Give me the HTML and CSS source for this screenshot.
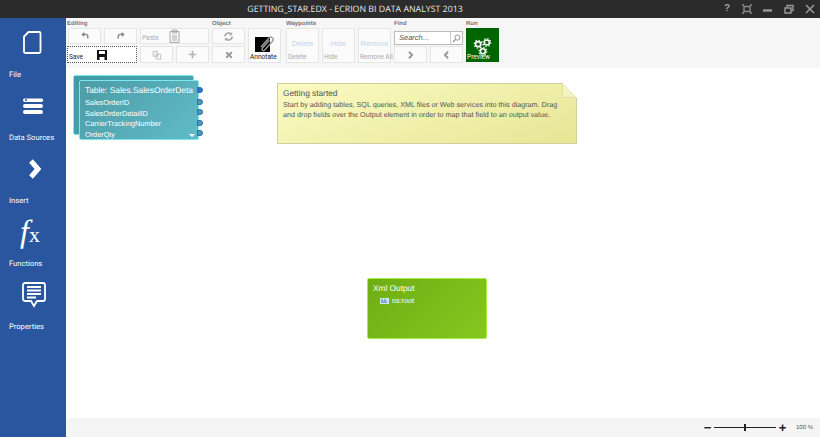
FILE: index.html
```html
<!DOCTYPE html>
<html lang="en">
<head>
    <meta charset="UTF-8">
    <title>GETTING_STAR.EDX - ECRION BI DATA ANALYST 2013</title>
    <link rel="stylesheet" href="styles.css">
</head>
<body>

<header class="titlebar">
    <div class="titlebar_text">GETTING_STAR.EDX - ECRION BI DATA ANALYST 2013</div>
    <div class="titlebar_btns">
        <span class="win_help">?</span>
        <svg width="12" height="12" viewBox="0 0 12 12"><path d="M1 2h2M9 2h2M1 10h2M9 10h2M3 3.500h6v5H3z" fill="none" stroke="#8a8a8a" stroke-width="1.400"/></svg>
        <svg width="12" height="12" viewBox="0 0 12 12"><path d="M1 7.500h9" stroke="#9a9a9a" stroke-width="2.400"/></svg>
        <svg width="12" height="12" viewBox="0 0 12 12"><path d="M2 5h6v5H2zM4 5V2.500h6v5H8" fill="none" stroke="#9a9a9a" stroke-width="1.400"/></svg>
        <svg width="12" height="12" viewBox="0 0 12 12"><path d="M2 2l8 8M10 2l-8 8" stroke="#9a9a9a" stroke-width="1.600"/></svg>
    </div>
</header>

<div class="app">
    <nav class="sidebar">
        <a class="side_item">
            <svg class="side_icon" width="34" height="34" viewBox="0 0 34 34"><path d="M12.500 7H23a1.500 1.500 0 0 1 1.500 1.500v18a1.500 1.500 0 0 1-1.500 1.500H9.500A1.500 1.500 0 0 1 8 26.500V11.500z" fill="none" stroke="#fff" stroke-width="1.800" stroke-linejoin="round"/></svg>
            <span>File</span>
        </a>
        <a class="side_item">
            <svg class="side_icon" width="34" height="34" viewBox="0 0 34 34"><path d="M7 12a1.500 1.500 0 0 1 1.500-1.500h17a1.500 1.500 0 0 1 0 3.500h-17A1.800 1.800 0 0 1 7 12zM7 18a2 2 0 0 1 2-2h16a2 2 0 0 1 0 4H9a2 2 0 0 1-2-2zM7 24a2 2 0 0 1 2-2h16a2 2 0 0 1 0 4H9a2 2 0 0 1-2-2z" fill="#fff"/><circle cx="10" cy="12" r="1" fill="#2a56a0"/></svg>
            <span>Data Sources</span>
        </a>
        <a class="side_item">
            <svg class="side_icon" width="34" height="34" viewBox="0 0 34 34"><path d="M15 10l7 8-7 8" fill="none" stroke="#fff" stroke-width="5"/></svg>
            <span>Insert</span>
        </a>
        <a class="side_item">
            <div class="side_fx"><i>f</i><span>x</span></div>
            <span>Functions</span>
        </a>
        <a class="side_item">
            <svg class="side_icon" width="34" height="34" viewBox="0 0 34 34"><path d="M9 6h18a2 2 0 0 1 2 2v14a2 2 0 0 1-2 2h-6l-3 5-3-5H9a2 2 0 0 1-2-2V8a2 2 0 0 1 2-2z" fill="none" stroke="#fff" stroke-width="1.800"/><path d="M11 10h14M11 13.500h14M11 17h14M11 20.500h9" stroke="#fff" stroke-width="1.800"/></svg>
            <span>Properties</span>
        </a>
    </nav>

    <div class="main">
        <section class="ribbon">
            <div class="rib_group rib_editing">
                <div class="rib_label">Editing</div>
                <div class="rib_grid editing_grid">
                    <button class="rib_btn"><svg width="10" height="8" viewBox="0 0 12 10"><path d="M9.500 8V5.500a2.500 2.500 0 0 0-2.500-2.500H3M5 .8L2.800 3 5 5.200" fill="none" stroke="#888" stroke-width="1.800"/></svg></button>
                    <button class="rib_btn"><svg width="10" height="8" viewBox="0 0 12 10"><path d="M2.500 8V5.500A2.500 2.500 0 0 1 5 3h4M7 .8L9.200 3 7 5.200" fill="none" stroke="#888" stroke-width="1.800"/></svg></button>
                    <button class="rib_btn rib_paste">
                        <span class="rib_caption">Paste</span>
                        <svg width="11" height="14" viewBox="0 0 11 14"><path d="M1 2.500h9v11H1zM3.500 1h4v3h-4zM3 7h5M3 9h5M3 11h5" fill="#f6f6f6" stroke="#aaa"/></svg>
                    </button>
                    <button class="rib_btn"><svg width="11" height="11" viewBox="0 0 12 12"><path d="M2 6a4 4 0 0 1 7-2.500M10 6a4 4 0 0 1-7 2.500" fill="none" stroke="#aaa" stroke-width="1.800"/><path d="M10 1v3.500H6.500M2 11V7.500h3.500" fill="#aaa"/></svg></button>
                    <button class="rib_btn rib_save">
                        <span class="rib_caption rib_caption-dark">Save</span>
                        <svg width="12" height="12" viewBox="0 0 12 12"><path d="M1 1h10v10H1z" fill="#111"/><path d="M3 2h6v3H3z" fill="#fff"/><path d="M3.500 8h5v3h-5z" fill="#fff"/></svg>
                    </button>
                    <button class="rib_btn"><svg width="10" height="10" viewBox="0 0 12 12"><path d="M1.500 1.500h5v6h-5zM5 5h5.500v6H5z" fill="#f4f4f4" stroke="#bbb"/></svg></button>
                    <button class="rib_btn"><svg width="9" height="9" viewBox="0 0 11 11"><path d="M5.500 1v9M1 5.500h9" stroke="#b5b5b5" stroke-width="2"/></svg></button>
                    <button class="rib_btn"><svg width="8" height="8" viewBox="0 0 10 10"><path d="M1.500 1.500l7 7M8.500 1.500l-7 7" stroke="#999" stroke-width="2.400"/></svg></button>
                </div>
            </div>
            <div class="rib_group rib_object">
                <div class="rib_label">Object</div>
                <button class="rib_btn rib_annotate">
                    <svg class="annotate_icon" width="22" height="20" viewBox="0 0 22 20"><path d="M0 4h15v15H0z" fill="#000"/><path d="M6 14l8-9a2.400 2.400 0 0 1 3.500 3.300l-8 9a1.500 1.500 0 0 1-2.200-2l7-8" fill="none" stroke="#999" stroke-width="1.400"/></svg>
                    <span class="rib_caption rib_caption-dark">Annotate</span>
                </button>
            </div>
            <div class="rib_group rib_waypoints">
                <div class="rib_label">Waypoints</div>
                <div class="way_row">
                    <button class="rib_btn way_btn"><span class="way_big">Delete</span><span class="rib_caption">Delete</span></button>
                    <button class="rib_btn way_btn"><span class="way_big">Hide</span><span class="rib_caption">Hide</span></button>
                    <button class="rib_btn way_btn"><span class="way_big">Remove</span><span class="rib_caption">Remove All</span></button>
                </div>
            </div>
            <div class="rib_group rib_find">
                <div class="rib_label">Find</div>
                <div class="find_box">
                    <span class="find_text">Search...</span>
                    <span class="find_go"><svg width="9" height="9" viewBox="0 0 10 10"><circle cx="6" cy="4" r="2.800" fill="none" stroke="#888"/><path d="M4 6L1 9" stroke="#888" stroke-width="1.300"/></svg></span>
                </div>
                <div class="find_row">
                    <button class="rib_btn"><svg width="7" height="8" viewBox="0 0 8 10"><path d="M2 1l4 4-4 4" fill="none" stroke="#999" stroke-width="2.400"/></svg></button>
                    <button class="rib_btn"><svg width="7" height="8" viewBox="0 0 8 10"><path d="M6 1L2 5l4 4" fill="none" stroke="#999" stroke-width="2.400"/></svg></button>
                </div>
            </div>
            <div class="rib_group rib_run">
                <div class="rib_label">Run</div>
                <button class="preview_btn">
                    <svg width="19" height="19" viewBox="0 0 24 24" fill="none" stroke="#fff">
                        <circle cx="6.500" cy="9" r="3.200" stroke-width="2"/><circle cx="6.500" cy="9" r="5" stroke-width="1.400" stroke-dasharray="1.800 2.100"/>
                        <circle cx="17.500" cy="7" r="3.200" stroke-width="2"/><circle cx="17.500" cy="7" r="5" stroke-width="1.400" stroke-dasharray="1.800 2.100"/>
                        <circle cx="12.500" cy="18" r="3.200" stroke-width="2"/><circle cx="12.500" cy="18" r="5" stroke-width="1.400" stroke-dasharray="1.800 2.100"/>
                    </svg>
                    <span class="preview_text">Preview</span>
                </button>
            </div>
        </section>

        <section class="canvas">
            <div class="table_back"></div>
            <div class="table_node">
                <div class="table_title">Table: Sales.SalesOrderDeta</div>
                <div class="table_field">SalesOrderID</div>
                <div class="table_field">SalesOrderDetailID</div>
                <div class="table_field">CarrierTrackingNumber</div>
                <div class="table_field">OrderQty</div>
                <span class="table_more"></span>
            </div>
            <span class="port port-main"></span>
            <span class="port port-1"></span>
            <span class="port port-2"></span>
            <span class="port port-3"></span>
            <span class="port port-4"></span>

            <div class="note">
                <div class="note_title">Getting started</div>
                <div class="note_text">Start by adding tables, SQL queries, XML files or Web services into this diagram. Drag and drop fields over the Output element in order to map that field to an output value.</div>
                <svg class="note_fold" width="15" height="15" viewBox="0 0 15 15"><path d="M0 0L15 15H0z" fill="#f4f3c0"/><path d="M0 0L15 15H0z" fill="none" stroke="#d0cf9c"/><path d="M0 0h15v15z" fill="#fff"/></svg>
            </div>

            <div class="output">
                <div class="output_title">Xml Output</div>
                <div class="output_row">
                    <svg width="9" height="6" viewBox="0 0 9 6"><path d="M0 0h9v6H0z" fill="#cfe3f7"/><path d="M1 2h2M4 2h2M1 4h6" stroke="#3a6aa8"/></svg>
                    <span>ns:root</span>
                </div>
            </div>
        </section>

        <footer class="statusbar">
            <span class="zoom_sign">&minus;</span>
            <div class="zoom_track"><span class="zoom_thumb"></span></div>
            <span class="zoom_sign">+</span>
            <span class="zoom_pct">100 %</span>
        </footer>
    </div>
</div>

</body>
</html>
```

FILE: styles.css
```css
* {
    box-sizing: border-box;
}

html, body {
    height: 100%;
}

body {
    margin: 0;
    display: flex;
    flex-direction: column;
    overflow: hidden;
    font-family: "Liberation Sans", Arial, sans-serif;
    text-rendering: geometricPrecision;
    background: #fff;
}

.titlebar {
    position: relative;
    height: 18px;
    flex: none;
    background: #2b2b2b;
    color: #e8e8e8;
}

.titlebar_text {
    text-align: center;
    font-family: "Open Sans", sans-serif;
    font-size: 8.800px;
    line-height: 18px;
    padding-right: 110px;
}

.titlebar_btns {
    position: absolute;
    top: 2px;
    right: 4px;
    display: flex;
    gap: 9px;
    align-items: center;
}

.win_help {
    width: 8px;
    color: #9a9a9a;
    font-size: 10px;
    font-weight: bold;
    line-height: 14px;
}

.app {
    flex: 1;
    display: flex;
    min-height: 0;
}

.sidebar {
    width: 66px;
    flex: none;
    background: #2a56a0;
    padding-top: 7px;
    color: #fff;
}

.side_item {
    display: block;
    height: 63px;
    position: relative;
    font-family: Roboto, sans-serif;
    font-size: 7.600px;
}

.side_item > span {
    position: absolute;
    left: 9px;
    top: 45px;
    line-height: 10px;
    white-space: nowrap;
}

.side_icon {
    display: block;
    margin-left: 16px;
}

.side_fx {
    margin-left: 20px;
    height: 34px;
    display: flex;
    font-family: "Liberation Serif", serif;
    color: #fff;
    align-items: flex-end;
}

.side_fx i {
    font-size: 32px;
    line-height: 34px;
}

.side_fx span {
    font-size: 22px;
    line-height: 26px;
}

.main {
    flex: 1;
    min-width: 0;
    display: flex;
    flex-direction: column;
}

.ribbon {
    height: 50px;
    flex: none;
    background: #f6f6f6;
    display: flex;
    padding-left: 1px;
}

.rib_group {
    display: flex;
    flex-direction: column;
}

.rib_label {
    height: 10px;
    padding-top: 2px;
    font-size: 6px;
    line-height: 8px;
    font-weight: bold;
    color: #777;
}

.rib_btn {
    position: relative;
    display: flex;
    align-items: center;
    justify-content: center;
    margin: 0;
    padding: 0;
    background: #fbfbfb;
    border: 1px solid #e6e6e6;
    font-family: inherit;
}

.rib_caption {
    position: absolute;
    left: 1px;
    bottom: 0;
    font-family: Roboto, sans-serif;
    font-size: 6.600px;
    line-height: 9px;
    color: #aaa;
    white-space: nowrap;
}

.rib_caption-dark {
    color: #222;
}

.rib_editing {
    width: 181px;
}

.editing_grid {
    display: grid;
    grid-template-columns: 33px 33px 33px 33px 33px;
    grid-template-rows: 16px 17px;
    column-gap: 3px;
    row-gap: 2px;
    padding-left: 1px;
}

.editing_grid .rib_btn:nth-child(3) {
    grid-column: 3 / 5;
}

.rib_save {
    grid-column: 1 / 3;
    margin-left: -1px;
    background: #fff;
    border: 1px dotted #555;
}

.rib_object {
    width: 38px;
}

.rib_object .rib_label {
    margin-left: -36px;
}

.rib_annotate {
    width: 33px;
    height: 35px;
}

.annotate_icon {
    margin: -5px 0 0 3px;
}

.rib_waypoints {
    width: 108px;
}

.way_row {
    display: flex;
    gap: 3px;
}

.way_btn {
    width: 33px;
    height: 35px;
    padding-bottom: 5px;
}

.way_big {
    color: #c3d4ea;
    font-size: 7.500px;
}

.rib_find {
    width: 72px;
}

.find_box {
    width: 69px;
    height: 14px;
    margin-top: 3px;
    display: flex;
    background: #fff;
    border: 1px solid #bbb;
}

.find_text {
    flex: 1;
    padding-left: 4px;
    font-size: 7.500px;
    line-height: 12px;
    font-style: italic;
    color: #555;
}

.find_go {
    width: 12px;
    border-left: 1px solid #ccc;
    display: flex;
    align-items: center;
    justify-content: center;
}

.find_row {
    display: flex;
    gap: 3px;
    margin-top: 1px;
}

.find_row .rib_btn {
    width: 33px;
    height: 17px;
}

.rib_run {
    width: 34px;
}

.preview_btn {
    position: relative;
    width: 33px;
    height: 34px;
    margin: 0;
    padding: 6px 0 0;
    background: #006400;
    border: 0;
    display: block;
}

.preview_text {
    position: absolute;
    left: 1px;
    bottom: 0;
    font-family: Roboto, sans-serif;
    font-size: 6.600px;
    line-height: 9px;
    color: #fff;
}

.canvas {
    position: relative;
    flex: 1;
    background: #fff;
}

.table_back {
    position: absolute;
    left: 7px;
    top: 7px;
    width: 121px;
    height: 60px;
    background: linear-gradient(135deg, #3f9ca6, #49a9b5);
    border: 1px solid #7fe6ee;
    border-radius: 2px;
}

.table_node {
    position: absolute;
    left: 13px;
    top: 12px;
    width: 120px;
    height: 60px;
    padding: 3px 0 0 5px;
    background: linear-gradient(135deg, #4d9ba6, #5fbcc8);
    border: 1px solid #7fe6ee;
    border-radius: 2px;
    color: #fff;
    overflow: hidden;
}

.table_title {
    font-size: 8.400px;
    line-height: 12px;
    white-space: nowrap;
    margin-bottom: 2px;
}

.table_field {
    font-size: 7.300px;
    line-height: 10.500px;
    white-space: nowrap;
}

.table_more {
    position: absolute;
    right: 3px;
    bottom: 2px;
    border-left: 3px solid transparent;
    border-right: 3px solid transparent;
    border-top: 3px solid #fff;
}

.port {
    position: absolute;
    left: 131px;
    width: 6px;
    height: 6px;
    background: #4d9ba6;
    border: 1px solid #2f6fb5;
    border-radius: 0 3px 3px 0;
}

.port-main {
    top: 19px;
    background: #2f6fc5;
}

.port-1 {
    top: 31px;
}

.port-2 {
    top: 41px;
}

.port-3 {
    top: 52px;
}

.port-4 {
    top: 62px;
}

.note {
    position: absolute;
    left: 211px;
    top: 15px;
    width: 300px;
    height: 61px;
    padding: 4px 5px;
    background: linear-gradient(160deg, #fbfbc3, #e6e696);
    border: 1px solid #cfcf9f;
    color: #555;
}

.note_title {
    font-size: 8.300px;
    line-height: 11px;
    margin-bottom: 1px;
}

.note_text {
    font-size: 7.200px;
    line-height: 10px;
}

.note_fold {
    position: absolute;
    right: -1px;
    top: -1px;
}

.output {
    position: absolute;
    left: 301px;
    top: 210px;
    width: 120px;
    height: 61px;
    padding: 3px 5px;
    background: linear-gradient(135deg, #6fae14, #84c81f);
    border: 1px solid #a8ec4a;
    border-radius: 2px;
    color: #fff;
}

.output_title {
    font-size: 8.300px;
    line-height: 12px;
}

.output_row {
    display: flex;
    align-items: center;
    gap: 3px;
    margin-top: 1px;
    padding-left: 7px;
    font-size: 7.200px;
    line-height: 11px;
}

.statusbar {
    height: 19px;
    flex: none;
    background: #f5f5f5;
    display: flex;
    align-items: center;
    justify-content: flex-end;
    padding-right: 6px;
}

.zoom_sign {
    font-size: 13px;
    line-height: 13px;
    color: #222;
    font-weight: bold;
    width: 9px;
    text-align: center;
}

.zoom_track {
    position: relative;
    width: 62px;
    height: 1px;
    margin: 0 2px;
    background: #222;
}

.zoom_thumb {
    position: absolute;
    left: 30px;
    top: -3px;
    width: 2px;
    height: 7px;
    background: #222;
}

.zoom_pct {
    width: 18px;
    margin-left: 9px;
    font-size: 6px;
    color: #555;
    white-space: nowrap;
}
```
